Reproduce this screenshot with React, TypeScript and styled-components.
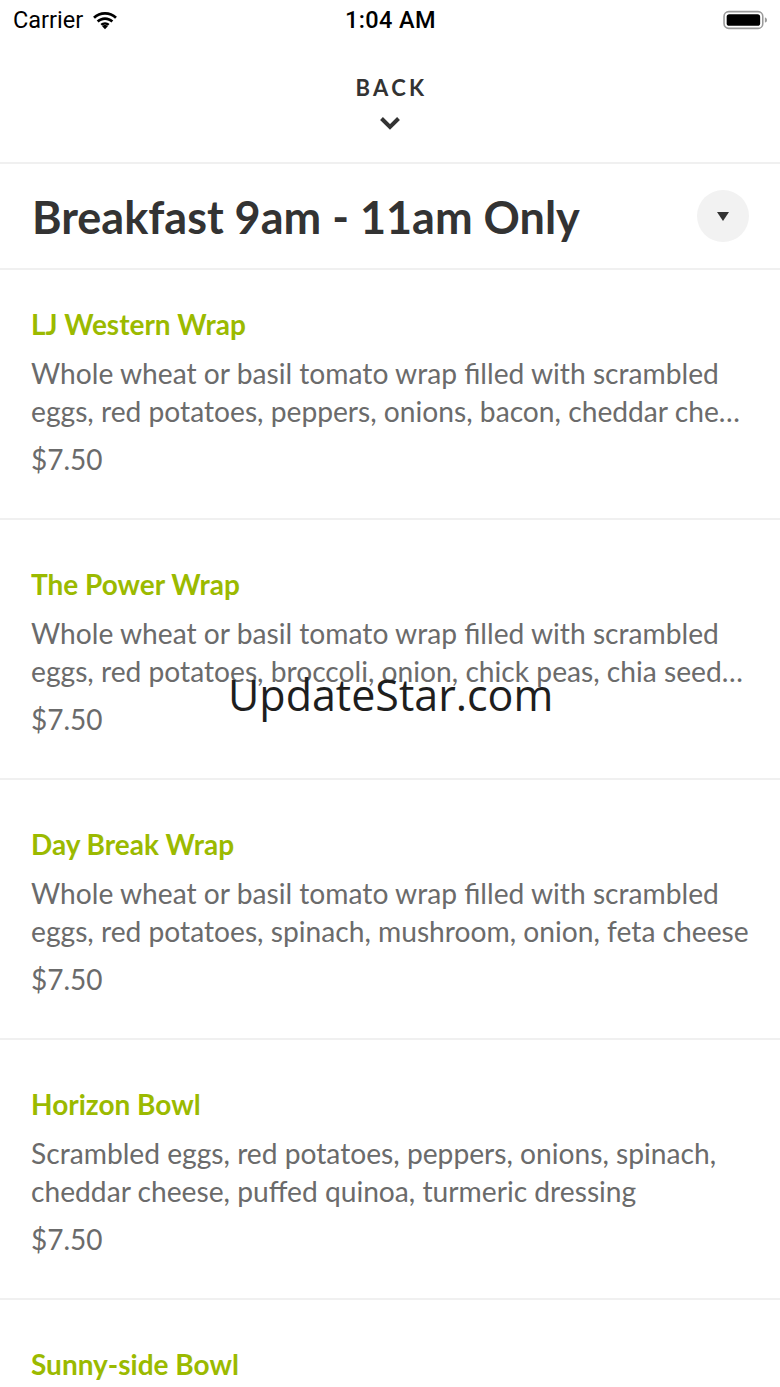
import React from 'react';
import styled, { createGlobalStyle } from 'styled-components';

const GlobalStyle = createGlobalStyle`
  html, body {
    margin: 0;
    padding: 0;
    background: #ffffff;
  }
  body {
    font-family: Lato, "Liberation Sans", sans-serif;
  }
`;

const Screen = styled.div`
  position: relative;
  width: 780px;
  height: 1387px;
  overflow: hidden;
  background: #fff;
`;

const StatusBar = styled.div`
  height: 40px;
  display: grid;
  grid-template-columns: 1fr auto 1fr;
  align-items: center;
  padding: 0 12px 0 13px;
  font-family: Roboto, "Liberation Sans", sans-serif;
  font-size: 23.5px;
  color: #000;
`;

const Carrier = styled.div`
  display: flex;
  align-items: center;
  gap: 9px;
`;

const Clock = styled.div`
  font-weight: 500;
  letter-spacing: 0.4px;
`;

const Battery = styled.div`
  justify-self: end;
  display: flex;
  align-items: center;
`;

const BackBar = styled.div`
  height: 124px;
  display: flex;
  flex-direction: column;
  align-items: center;
  padding-top: 34px;
  box-sizing: border-box;
  border-bottom: 2px solid #f0f0f0;
`;

const BackLabel = styled.div`
  font-size: 22px;
  font-weight: 700;
  letter-spacing: 3.3px;
  color: #333;
  line-height: 28px;
  padding-left: 3px;
`;

const Chevron = styled.div`
  margin-top: 14px;
  line-height: 0;
`;

const SectionHeader = styled.div`
  height: 104px;
  display: flex;
  align-items: center;
  justify-content: space-between;
  padding: 0 31px 0 32px;
  border-bottom: 2px solid #f0f0f0;
`;

const SectionTitle = styled.h1`
  margin: 0;
  font-size: 45px;
  font-weight: 700;
  color: #333;
  line-height: 52px;
  padding-top: 2px;
`;

const DropButton = styled.div`
  width: 52px;
  height: 52px;
  border-radius: 50%;
  background: #f2f2f2;
  display: flex;
  align-items: center;
  justify-content: center;
`;

const Triangle = styled.div`
  width: 0;
  height: 0;
  border-left: 6px solid transparent;
  border-right: 6px solid transparent;
  border-top: 9px solid #333;
`;

const Item = styled.div<{ $first?: boolean }>`
  padding: ${(p) => (p.$first ? '36px' : '46px')} 31px 40px 31px;
  border-bottom: 2px solid #f0f0f0;
`;

const ItemName = styled.div`
  font-size: 28px;
  font-weight: 700;
  color: #9bba00;
  line-height: 36px;
`;

const ItemDesc = styled.div`
  margin-top: 12px;
  font-size: 28.2px;
  color: #6b6b6b;
  line-height: 38px;
`;

const DescLine = styled.div`
  white-space: nowrap;
  overflow: hidden;
  text-overflow: ellipsis;
`;

const ItemPrice = styled.div`
  margin-top: 10px;
  font-size: 28px;
  color: #6b6b6b;
  line-height: 38px;
`;

const Watermark = styled.div`
  position: absolute;
  left: 228px;
  top: 668px;
  font-family: "Open Sans", "Noto Sans", sans-serif;
  font-size: 43px;
  color: #1e1e1e;
  line-height: 54px;
  pointer-events: none;
`;

const menu = [
  {
    name: 'LJ Western Wrap',
    desc: [
      'Whole wheat or basil tomato wrap filled with scrambled',
      'eggs, red potatoes, peppers, onions, bacon, cheddar cheese, salsa',
    ],
    price: '$7.50',
  },
  {
    name: 'The Power Wrap',
    desc: [
      'Whole wheat or basil tomato wrap filled with scrambled',
      'eggs, red potatoes, broccoli, onion, chick peas, chia seeds, feta',
    ],
    price: '$7.50',
  },
  {
    name: 'Day Break Wrap',
    desc: [
      'Whole wheat or basil tomato wrap filled with scrambled',
      'eggs, red potatoes, spinach, mushroom, onion, feta cheese',
    ],
    price: '$7.50',
  },
  {
    name: 'Horizon Bowl',
    desc: [
      'Scrambled eggs, red potatoes, peppers, onions, spinach,',
      'cheddar cheese, puffed quinoa, turmeric dressing',
    ],
    price: '$7.50',
  },
  {
    name: 'Sunny-side Bowl',
    desc: [
      'Fried eggs, red potatoes, black beans, peppers, onions,',
      'cheddar cheese, salsa',
    ],
    price: '$7.50',
  },
];

const App = () => {
  return (
    <Screen>
      <GlobalStyle />
      <StatusBar>
        <Carrier>
          Carrier
          <svg width="26" height="19" viewBox="0 0 22 16">
            <path d="M11 3.2c3.3 0 6.3 1.3 8.5 3.4l1.6-1.7C18.4 2.4 14.9 0.8 11 0.8S3.6 2.4 0.9 4.9l1.6 1.7C4.7 4.5 7.7 3.2 11 3.2z" fill="#000" />
            <path d="M11 7.6c2.1 0 4 0.8 5.4 2.1l1.6-1.7C16.2 6.3 13.7 5.2 11 5.2S5.8 6.3 4 8l1.6 1.7C7 8.4 8.9 7.6 11 7.6z" fill="#000" />
            <path d="M11 11.8c0.9 0 1.8 0.4 2.4 1l-2.4 2.6-2.4-2.6c0.6-0.6 1.5-1 2.4-1z" fill="#000" />
            <path d="M11 9.5c1.5 0 2.8 0.6 3.8 1.5l-1.4 1.5c-0.6-0.6-1.5-1-2.4-1s-1.8 0.4-2.4 1L7.2 11c1-0.9 2.3-1.5 3.8-1.5z" fill="#000" />
          </svg>
        </Carrier>
        <Clock>1:04 AM</Clock>
        <Battery>
          <svg width="45" height="22" viewBox="0 0 43 20">
            <rect x="1" y="2" width="37" height="16" rx="4.5" fill="none" stroke="#9a9a9a" strokeWidth="1.5" />
            <rect x="3.5" y="4.5" width="32" height="11" rx="2.5" fill="#000" />
            <path d="M40 7.5c1.5 0.3 2 1.2 2 2.5s-0.5 2.2-2 2.5z" fill="#9a9a9a" />
          </svg>
        </Battery>
      </StatusBar>

      <BackBar>
        <BackLabel>BACK</BackLabel>
        <Chevron>
          <svg width="22" height="14" viewBox="0 0 22 14">
            <path d="M2.5 2.5 L11 11 L19.5 2.5" fill="none" stroke="#333" strokeWidth="4" strokeLinecap="butt" strokeLinejoin="miter" />
          </svg>
        </Chevron>
      </BackBar>

      <SectionHeader>
        <SectionTitle>Breakfast 9am - 11am Only</SectionTitle>
        <DropButton>
          <Triangle />
        </DropButton>
      </SectionHeader>

      {menu.map((item, i) => (
        <Item key={item.name} $first={i === 0}>
          <ItemName>{item.name}</ItemName>
          <ItemDesc>
            {item.desc.map((line) => (
              <DescLine key={line}>{line}</DescLine>
            ))}
          </ItemDesc>
          <ItemPrice>{item.price}</ItemPrice>
        </Item>
      ))}

      <Watermark>UpdateStar.com</Watermark>
    </Screen>
  );
};

export default App;
